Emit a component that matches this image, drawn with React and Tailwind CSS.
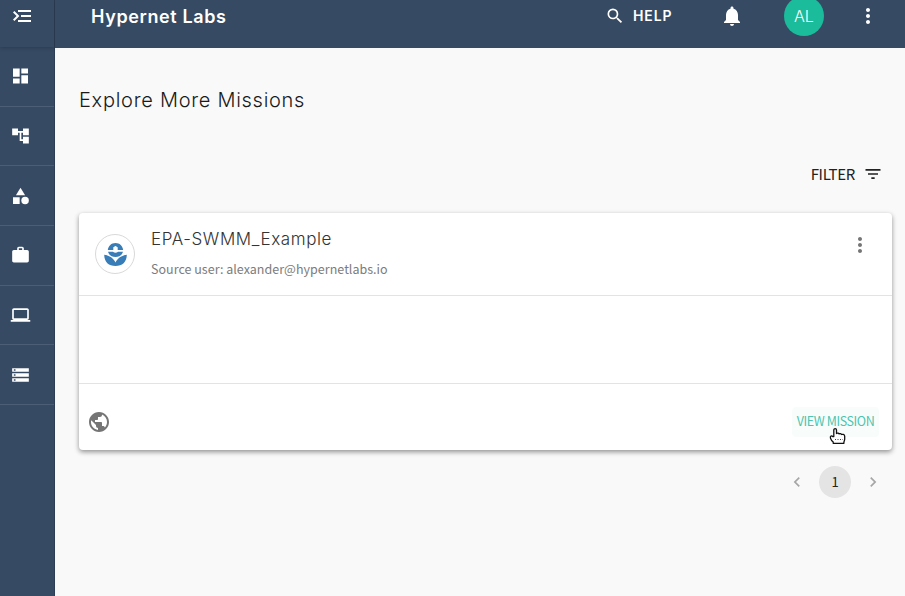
import React from "react";
import {
  MdMenuOpen, MdDashboard, MdAccountTree, MdCategory, MdWork, MdLaptop, MdStorage,
  MdSearch, MdNotifications, MdMoreVert, MdFilterList, MdPublic, MdChevronLeft, MdChevronRight,
} from "react-icons/md";

const navItems = [
  { name: "Dashboard", Icon: MdDashboard },
  { name: "Workflows", Icon: MdAccountTree },
  { name: "Categories", Icon: MdCategory },
  { name: "Jobs", Icon: MdWork },
  { name: "Devices", Icon: MdLaptop },
  { name: "Storage", Icon: MdStorage },
];

function Sidebar() {
  return (
    <aside className="flex w-[55px] shrink-0 flex-col border-r border-[#2c3d54] bg-[#364a63]">
      <div className="flex h-[47px] items-start pl-[10px] pt-1 shadow-[0_1px_4px_rgba(0,0,0,0.2)]">
        <MdMenuOpen size={24} className="-scale-x-100 text-white" />
      </div>
      <nav className="flex h-[358px] flex-col">
        {navItems.map(({ name, Icon }) => (
          <a key={name} className="flex flex-1 items-center border-b border-[#4c5d76] pl-[10px] text-white">
            <Icon size={20} className="translate-x-[0.5px]" />
          </a>
        ))}
      </nav>
    </aside>
  );
}

function Header() {
  return (
    <header className="flex h-12 items-start bg-[#364a63] pl-9 text-white">
      <h1 className="mt-[5px] w-[140px] whitespace-nowrap text-[18px] font-semibold leading-6 tracking-[0.62px]">Hypernet Labs</h1>
      <div className="ml-auto flex h-8 items-center">
        <MdSearch size={20} />
        <span className="ml-2 w-[40px] pb-px text-[14px] font-semibold tracking-[0.9px]">HELP</span>
        <MdNotifications size={24} className="ml-[47px]" />
        <div className="ml-10 flex size-10 items-center justify-center rounded-full bg-[#1abc9c] text-[16px] font-light">AL</div>
        <MdMoreVert size={24} className="ml-8 mr-[25px]" />
      </div>
    </header>
  );
}

function MissionLogo() {
  return (
    <div className="flex size-10 shrink-0 items-center justify-center rounded-full border border-[#d9d9d9]">
      <svg width="24" height="24" viewBox="0 0 24 24" fill="#387db8">
        <path d="M4.8 8C5.400 3.700 8.300.9 12.500.9S19.600 3.700 20.200 8h-5.500V5.600q0-.8-.8-.6-.6-1-1.400-1t-1.400 1q-.8-.2-.8.6V8z" />
        <path d="M5 9.800h4.900q1.200 1 2.600 1t2.600-1H20c-.9 3.300-3.800 5.200-7.500 5.200S5.900 13.100 5 9.800z" />
        <path d="M1.200 12.700C6.500 13.400 10.800 16.200 12.500 20.600 14.200 16.200 18.500 13.400 23.800 12.700 23.800 20 19.200 24 12.500 24S1.200 20 1.200 12.700z" />
      </svg>
    </div>
  );
}

function HandCursor() {
  return (
    <svg className="absolute left-[37px] top-[20px]" width="18" height="18" viewBox="0 0 18 18">
      <path d="M4.800 9.500V3C4.800 1.100 7.500 1.100 7.500 3V6.500c.8-.6 2.200-.4 2.600.4.700-.5 2.100-.2 2.400.6.900-.4 3.200-.2 3.200 1.700v2.900c0 1.300-.6 2-.8 3.100v1.100H4.200v-1.200C3 14 2 12.600 1.500 11.200c-.8-2 1.300-2.900 2.300-1.600z" fill="#fff" stroke="#111" strokeWidth="1.3" strokeLinejoin="round" />
      <path d="M6 12.500h8" stroke="#444" strokeDasharray="1 1.500" />
    </svg>
  );
}

function MissionCard() {
  return (
    <article className="mt-[23px] h-[237px] rounded bg-white shadow-[0_2px_5px_rgba(0,0,0,0.42)]">
      <div className="flex h-[83px] border-b border-[#e3e3e3] pl-4">
        <div className="pt-[21px]"><MissionLogo /></div>
        <div className="ml-4">
          <h3 className="mt-[14px] whitespace-nowrap text-[17px] font-light leading-6 tracking-[0.6px] text-[#333]">EPA-SWMM_Example</h3>
          <p className="mt-2 whitespace-nowrap font-['Noto_Sans_CJK_SC',sans-serif] text-[12.5px] leading-5 tracking-[0.02px] text-[#7c7c7c]">Source user: alexander@hypernetlabs.io</p>
        </div>
        <MdMoreVert size={24} className="ml-auto mr-5 mt-5 text-[#757575]" />
      </div>
      <div className="h-[88px] border-b border-[#e3e3e3]" />
      <div className="flex h-[66px] items-center pl-2 pr-[13px] pt-[10px]">
        <MdPublic size={24} className="text-[#757575]" />
        <div className="relative ml-auto flex h-[30px] w-[87px] items-center justify-center rounded bg-[#f8fdfb] font-['Noto_Sans_CJK_SC',sans-serif] text-[12.5px] tracking-[-0.4px] text-[#4bc5b0]">
          <span className="whitespace-nowrap pb-px">VIEW MISSION</span>
          <HandCursor />
        </div>
      </div>
    </article>
  );
}

export default function App() {
  return (
    <div className="flex h-[596px] w-[905px] overflow-hidden bg-[#f9f9f9] font-[Inter,sans-serif]">
      <Sidebar />
      <div className="flex min-w-0 flex-1 flex-col">
        <Header />
        <main className="pl-6 pr-[13px]">
          <h2 className="mt-9 whitespace-nowrap text-[20px] font-light leading-8 tracking-[0.72px] text-[#1a1a1a]">Explore More Missions</h2>
          <div className="mt-[44px] flex h-[30px] items-center justify-end pr-[7px] font-['Noto_Sans_CJK_SC',sans-serif] text-[15px] text-[#222]">
            <span className="pb-px tracking-[-0.3px]">FILTER</span>
            <MdFilterList size={20} className="-mt-[3px] ml-2 mr-[2px]" />
          </div>
          <MissionCard />
          <div className="mt-4 flex h-8 items-center justify-end pr-[9px] text-[#a6a6a6]">
            <MdChevronLeft size={20} />
            <span className="mx-3 flex size-8 items-center justify-center rounded-full bg-[#e4e4e4] font-['Noto_Sans_CJK_SC',sans-serif] text-[13px] text-[#222]">1</span>
            <MdChevronRight size={20} />
          </div>
        </main>
      </div>
    </div>
  );
}
